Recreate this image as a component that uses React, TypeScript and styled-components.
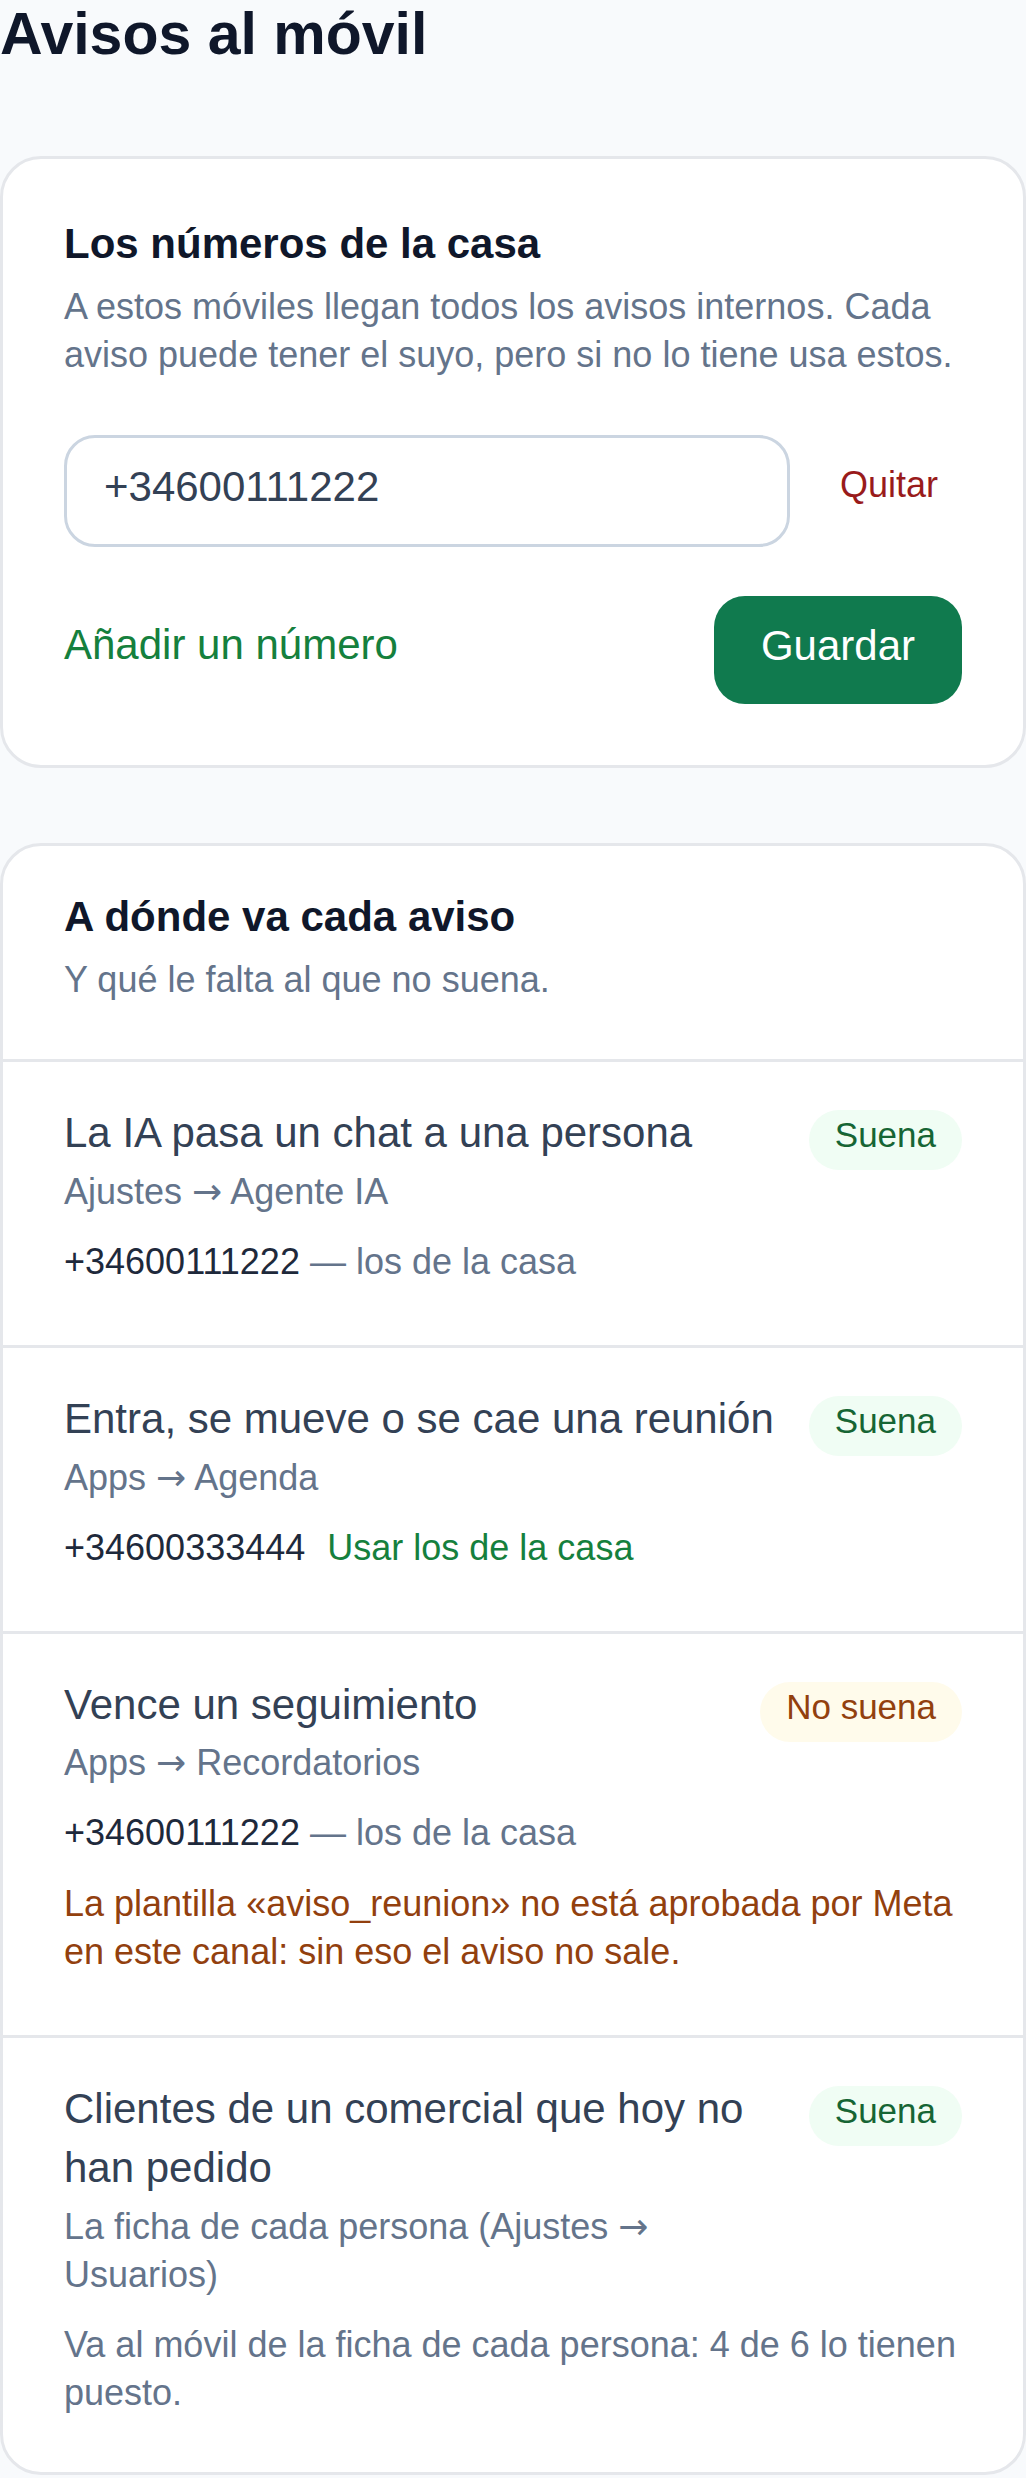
import styled, { createGlobalStyle } from "styled-components";

const GlobalStyle = createGlobalStyle`
    body {
        margin: 0;
        background-color: #f8fafc;
        font-family: "Liberation Sans", Arial, sans-serif;
    }
`;

const Page = styled.div`
    background-color: #f8fafc;
    min-height: 100vh;
    color: #1e293b;
`;

const PageTitle = styled.h1`
    margin: 0 0 88px;
    font-size: 59px;
    font-weight: 700;
    line-height: normal;
    color: #0f172a;
`;

const Card = styled.section<{ $flush?: boolean }>`
    background-color: #ffffff;
    border: 3px solid #e5e7eb;
    border-radius: 41px;
    padding: ${(p) => (p.$flush ? "0" : "61px")};
    margin-bottom: 75px;
    overflow: hidden;
`;

const CardHeader = styled.div`
    padding: 47px 61px 55px;
`;

const Heading = styled.h2`
    margin: 0;
    font-size: 42px;
    font-weight: 700;
    line-height: 47px;
    color: #0f172a;
`;

const Description = styled.p`
    margin: 16px 0 0;
    font-size: 36px;
    line-height: 48px;
    color: #64748b;
`;

const NumberList = styled.div`
    margin-top: 56px;
    display: flex;
    flex-direction: column;
    gap: 24px;
`;

const NumberRow = styled.div`
    display: flex;
    align-items: flex-start;
    gap: 26px;
`;

const PhoneInput = styled.input`
    flex: 1;
    min-width: 0;
    height: 112px;
    box-sizing: border-box;
    padding: 0 37px 9px;
    border: 3px solid #cbd5e1;
    border-radius: 31px;
    background: #ffffff;
    font-family: inherit;
    font-size: 42px;
    color: #334155;
    outline: none;
`;

const TextButton = styled.button<{ $tone: "danger" | "accent" }>`
    background: none;
    border: none;
    padding: ${(p) => (p.$tone === "danger" ? "29px 24px 0" : "0 0 11px")};
    font-family: inherit;
    font-size: ${(p) => (p.$tone === "danger" ? "36px" : "42px")};
    color: ${(p) => (p.$tone === "danger" ? "#991b1b" : "#15803d")};
    cursor: pointer;
`;

const Actions = styled.div`
    margin-top: 49px;
    display: flex;
    align-items: center;
    justify-content: space-between;
`;

const SaveButton = styled.button`
    height: 108px;
    padding: 0 47px 9px;
    border: none;
    border-radius: 31px;
    background-color: #107a4e;
    color: #ffffff;
    font-family: inherit;
    font-size: 42px;
    cursor: pointer;
`;

const Row = styled.div`
    border-top: 3px solid #e5e7eb;
    padding: 42px 61px 59px;
    &:last-child {
        padding-bottom: 55px;
    }
`;

const RowTop = styled.div`
    display: flex;
    align-items: flex-start;
    justify-content: space-between;
    gap: 26px;
`;

const RowText = styled.div`
    flex: 1;
    min-width: 0;
`;

const RowTitle = styled.div`
    font-size: 42px;
    line-height: 58.8px;
    color: #334155;
`;

const RowWhere = styled.div`
    margin-top: 5px;
    font-size: 36px;
    line-height: 48px;
    color: #64748b;
`;

const Arrow = styled.span`
    font-family: "DejaVu Sans", sans-serif;
`;

const Status = styled.span<{ $ok: boolean }>`
    flex-shrink: 0;
    margin-top: 6px;
    padding: 5px 26px 15px;
    border-radius: 999px;
    font-size: 35px;
    line-height: 40px;
    background-color: ${(p) => (p.$ok ? "#f0fdf4" : "#fffbeb")};
    color: ${(p) => (p.$ok ? "#166534" : "#92400e")};
`;

const Line = styled.p<{ $tone?: "muted" | "warn" }>`
    margin: 22px 0 0;
    font-size: 36px;
    line-height: 48px;
    color: ${(p) => (p.$tone === "warn" ? "#92400e" : p.$tone === "muted" ? "#64748b" : "#1e293b")};
    & + & {
        margin-top: 23px;
    }
`;

const Muted = styled.span`
    color: #64748b;
`;

const InlineLink = styled.button`
    margin-left: 22px;
    padding: 0;
    background: none;
    border: none;
    font-family: inherit;
    font-size: 36px;
    color: #15803d;
    cursor: pointer;
`;

type Route = {
    title: string;
    where: string;
    ok: boolean;
    phone?: string;
    own?: boolean;
    note?: string;
    warn?: string;
};

const routes: Route[] = [
    { title: "La IA pasa un chat a una persona", where: "Ajustes → Agente IA", ok: true, phone: "+34600111222" },
    { title: "Entra, se mueve o se cae una reunión", where: "Apps → Agenda", ok: true, phone: "+34600333444", own: true },
    {
        title: "Vence un seguimiento",
        where: "Apps → Recordatorios",
        ok: false,
        phone: "+34600111222",
        warn: "La plantilla «aviso_reunion» no está aprobada por Meta en este canal: sin eso el aviso no sale.",
    },
    {
        title: "Clientes de un comercial que hoy no han pedido",
        where: "La ficha de cada persona (Ajustes → Usuarios)",
        ok: true,
        note: "Va al móvil de la ficha de cada persona: 4 de 6 lo tienen puesto.",
    },
];

// the arrow comes from DejaVu, like in the original
function Where({ text }: { text: string }) {
    const parts = text.split("→");
    return (
        <RowWhere>
            {parts.map((part, i) => (
                <span key={i}>
                    {i > 0 && <Arrow>→</Arrow>}
                    {part}
                </span>
            ))}
        </RowWhere>
    );
}

export default function App() {
    return (
        <>
            <GlobalStyle />
            <Page>
                <PageTitle>Avisos al móvil</PageTitle>

                <Card>
                    <Heading>Los números de la casa</Heading>
                    <Description>
                        A estos móviles llegan todos los avisos internos. Cada aviso puede tener el suyo, pero si no lo tiene usa estos.
                    </Description>
                    <NumberList>
                        <NumberRow>
                            <PhoneInput type="tel" defaultValue="+34600111222" />
                            <TextButton $tone="danger">Quitar</TextButton>
                        </NumberRow>
                    </NumberList>
                    <Actions>
                        <TextButton $tone="accent">Añadir un número</TextButton>
                        <SaveButton>Guardar</SaveButton>
                    </Actions>
                </Card>

                <Card $flush>
                    <CardHeader>
                        <Heading>A dónde va cada aviso</Heading>
                        <Description>Y qué le falta al que no suena.</Description>
                    </CardHeader>
                    {routes.map((r) => (
                        <Row key={r.title}>
                            <RowTop>
                                <RowText>
                                    <RowTitle>{r.title}</RowTitle>
                                    <Where text={r.where} />
                                </RowText>
                                <Status $ok={r.ok}>{r.ok ? "Suena" : "No suena"}</Status>
                            </RowTop>
                            {r.phone && (
                                <Line>
                                    {r.phone}
                                    {r.own ? (
                                        <InlineLink>Usar los de la casa</InlineLink>
                                    ) : (
                                        <Muted> — los de la casa</Muted>
                                    )}
                                </Line>
                            )}
                            {r.note && <Line $tone="muted">{r.note}</Line>}
                            {r.warn && <Line $tone="warn">{r.warn}</Line>}
                        </Row>
                    ))}
                </Card>
            </Page>
        </>
    );
}
